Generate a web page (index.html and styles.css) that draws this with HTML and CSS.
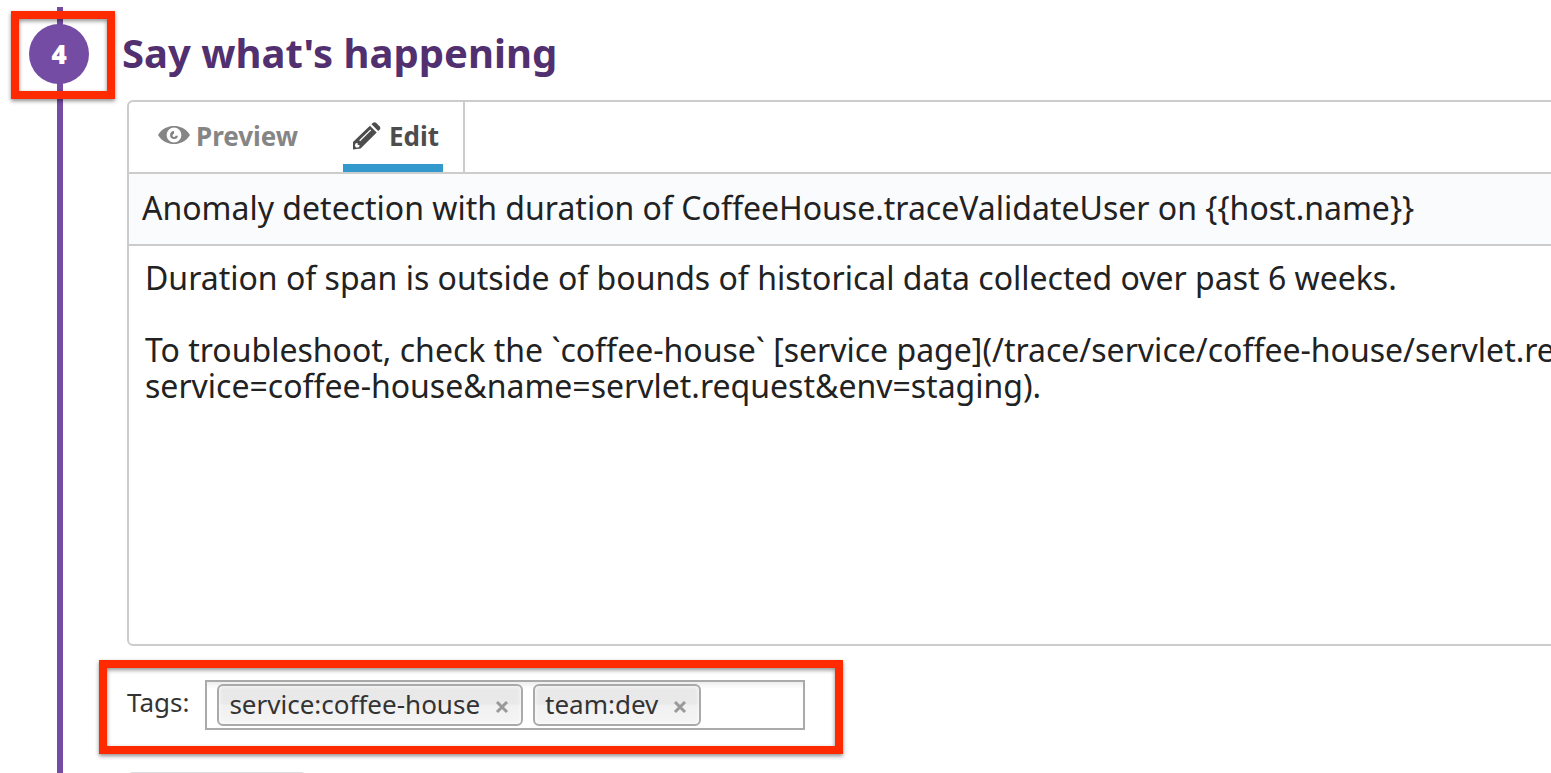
FILE: index.html
```html
<!DOCTYPE html>
<html lang="en">
<head>
<meta charset="utf-8">
<title>Say what's happening</title>
<link rel="stylesheet" href="styles.css">
</head>
<body>
<main class="step">
  <div class="rail">
    <div class="marker">
      <span class="number">4</span>
      <span class="highlight highlight-step"></span>
    </div>
  </div>
  <section class="content">
    <h2 class="heading">Say what's happening</h2>
    <div class="editor">
      <div class="tabs">
        <button class="tab" type="button">
          <svg class="eye" viewBox="0 0 32 20" aria-hidden="true">
            <path fill="currentColor" fill-rule="evenodd" d="M0 10C4 3.500 10 1 16 1s12 2.500 16 9c-4 6.500-10 9-16 9S4 16.500 0 10zM16 2.600a7.400 7.400 0 1 0 0 14.800a7.400 7.400 0 0 0 0-14.800z"/>
            <path fill="currentColor" d="M16 6v3a1.500 1.500 0 1 0 1.500 1.800h2.500A4 4 0 1 1 16 6z"/>
          </svg>
          <span>Preview</span>
        </button>
        <button class="tab tab-active" type="button">
          <svg class="pencil" viewBox="0 0 28 28" aria-hidden="true">
            <path fill="currentColor" d="M18.500 2.200l1.200-1.200q1.800-1.600 3.600 0l3.200 3.200q1.700 1.800 0 3.600l-1.300 1.300z"/>
            <path fill="currentColor" fill-rule="evenodd" d="M16.900 3.700l6.800 6.900L7.600 26.500 0 27.500V20zM2.500 21.500l-.7 2.200 1.500 2 2.700-.5.700-2-2-.4-.2-2zM6.200 18.300l.9.900L18.200 8.300l-.9-.9z"/>
          </svg>
          <span>Edit</span>
        </button>
      </div>
      <input class="subject" type="text" aria-label="Message title" value="Anomaly detection with duration of CoffeeHouse.traceValidateUser on {{host.name}}">
      <textarea class="message" aria-label="Message" wrap="off" spellcheck="false">Duration of span is outside of bounds of historical data collected over past 6 weeks.

To troubleshoot, check the `coffee-house` [service page](/trace/service/coffee-house/servlet.request?
service=coffee-house&amp;name=servlet.request&amp;env=staging).</textarea>
    </div>
    <div class="tags-row">
      <label for="tag-input">Tags:</label>
      <div class="tag-box">
        <span class="tag">service:coffee-house
          <button class="remove" type="button" aria-label="Remove service:coffee-house"><svg viewBox="0 0 14 14" aria-hidden="true"><path d="M2 2l10 10M12 2L2 12"/></svg></button>
        </span>
        <span class="tag">team:dev
          <button class="remove" type="button" aria-label="Remove team:dev"><svg viewBox="0 0 14 14" aria-hidden="true"><path d="M2 2l10 10M12 2L2 12"/></svg></button>
        </span>
        <input class="tag-input" id="tag-input" type="text">
      </div>
      <span class="highlight highlight-tags"></span>
    </div>
    <button class="next" type="button" aria-label="Next"></button>
  </section>
</main>
</body>
</html>
```
FILE: styles.css
```css
* { box-sizing: border-box; }

body {
  margin: 0;
  height: 100vh;
  overflow: hidden;
  background: #fff;
  color: #222;
  font-family: "Noto Sans", "Open Sans", sans-serif;
}

button, input, textarea { font: inherit; color: inherit; margin: 0; }
button { border: 0; background: none; padding: 0; }
input, textarea { border: 0; outline: 0; border-radius: 0; }
svg { display: block; }

.step {
  display: grid;
  grid-template-columns: 120px minmax(0, 1fr);
  min-height: 100vh;
  padding-top: 7px;
}

.rail {
  padding: 17px 0 0 29px;
  background: linear-gradient(#754ca4, #754ca4) 57px 0 / 6px 100% no-repeat;
}

.marker { position: relative; width: 60px; height: 60px; }

.number {
  display: flex;
  align-items: center;
  justify-content: center;
  height: 100%;
  border-radius: 50%;
  background: #754ca4;
  color: #fff;
  font-size: 26px;
  font-weight: 900;
}

.highlight {
  position: absolute;
  border: 8px solid #ff2a00;
  box-shadow: 0 2px 4px rgba(0, 0, 0, .45), inset 0 2px 4px rgba(0, 0, 0, .45);
  pointer-events: none;
}
.highlight-step { inset: -13px -26px -15px -18px; }
.highlight-tags { top: -20px; bottom: -24px; left: -28px; width: 744px; }

.heading {
  margin: 0;
  padding-left: 2px;
  height: 93px;
  line-height: 92px;
  color: #52306f;
  font-size: 40px;
  font-weight: 700;
}

.editor {
  margin: 0 -32px 0 7px;
  border: 2px solid #ccc;
  border-radius: 6px;
}

.tabs {
  display: flex;
  width: 336px;
  height: 70px;
  padding: 0 20px 0 21px;
  border-right: 2px solid #ccc;
  justify-content: space-between;
}

.tab {
  display: flex;
  align-items: center;
  padding: 0 8px 2px;
  gap: 6px;
  color: #858585;
  font-size: 26px;
  font-weight: 700;
  line-height: 36px;
}
.tab-active {
  gap: 8px;
  padding: 6px 4px 0 10px;
  border-bottom: 8px solid #3399cc;
  color: #4d4d4d;
}
.eye { width: 32px; height: 20px; margin-bottom: 2px; }
.pencil { width: 28px; height: 28px; }

.subject {
  display: block;
  width: 100%;
  height: 74px;
  padding: 0 13px 4px;
  border-top: 2px solid #ccc;
  border-bottom: 2px solid #ccc;
  background: #fafbfd;
  font-size: 32px;
}

.message {
  display: block;
  width: 100%;
  height: 398px;
  padding: 14px 16px;
  border-radius: 6px;
  background: #fff;
  font-size: 32px;
  line-height: 36px;
  resize: none;
  overflow: hidden;
}

.tags-row {
  position: relative;
  display: flex;
  gap: 16px;
  margin: 34px 0 42px 7px;
  color: #333;
  font-size: 26px;
  line-height: 36px;
}
.tags-row label { padding-top: 4px; }

.tag-box {
  display: flex;
  width: 600px;
  height: 50px;
  gap: 10px;
  padding: 2px 10px;
  border: 2px solid #aaa;
  background: linear-gradient(#eee, #fff 15%);
}

.tag {
  display: flex;
  align-items: center;
  gap: 15px;
  height: 42px;
  padding: 0 12px 2px 10px;
  border: 2px solid #aaa;
  border-radius: 6px;
  background: linear-gradient(#e8e8e8, #e9e9e9 48%, #f0f0f0 50%, #f5f5f5);
  box-shadow: inset 0 0 4px #fff;
}

.remove { padding-top: 6px; }
.remove svg { width: 14px; height: 14px; }
.remove path { stroke: #999; stroke-width: 3; }

.tag-input { flex: 1; min-width: 0; background: transparent; }

.next {
  display: block;
  width: 180px;
  height: 56px;
  margin-left: 7px;
  border: 2px solid #dcdce0;
  border-radius: 6px;
}
```
